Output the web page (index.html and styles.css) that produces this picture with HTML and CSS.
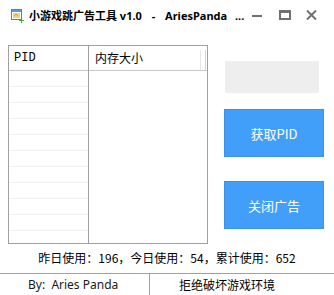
FILE: index.html
```html
<!DOCTYPE html>
<html>
<head>
<meta charset="utf-8">
<link rel="stylesheet" href="styles.css">
</head>
<body>
<div class="titlebar">
  <svg class="appicon" width="13" height="14" viewBox="0 0 13 14">
    <rect x="0.5" y="0.5" width="10" height="10" fill="#fff" stroke="#7a7a7a"/>
    <rect x="1" y="1" width="9" height="2" fill="#5b9bd5"/>
    <rect x="2" y="4" width="7" height="5" fill="#f3d27a"/>
    <path d="M3 7 L5 5 L7 7" stroke="#c9a040" fill="none"/>
    <path d="M10.5 9 V14 M8 11.5 H13" stroke="#3fa35a" stroke-width="1.2"/>
  </svg>
  <span class="title">小游戏跳广告工具 v1.0<span class="wide"> - AriesPanda</span><span class="dots"> ...</span></span>
  <div class="controls">
    <span class="ctl min"></span>
    <span class="ctl max"></span>
    <svg class="ctl close" width="11" height="10" viewBox="0 0 11 10"><path d="M1 0.5 L10 9.5 M10 0.5 L1 9.5" stroke="#707070" stroke-width="2"/></svg>
  </div>
</div>
<div class="main">
  <div class="list">
    <div class="col col-pid">
      <div class="head">PID</div>
      <div class="rows">
        <div class="row"></div><div class="row"></div><div class="row"></div><div class="row"></div>
        <div class="row"></div><div class="row"></div><div class="row"></div><div class="row"></div>
        <div class="row"></div><div class="row"></div><div class="row"></div>
      </div>
    </div>
    <div class="col col-mem">
      <div class="head">内存大小<span class="grip"></span></div>
    </div>
  </div>
  <div class="side">
    <div class="field"></div>
    <button class="btn btn-get">获取PID</button>
    <button class="btn btn-close">关闭广告</button>
  </div>
</div>
<div class="stats">昨日使用：196，今日使用：54，累计使用：652</div>
<div class="footer">
  <div class="by">By:&nbsp; Aries Panda</div>
  <div class="motto">拒绝破坏游戏环境</div>
</div>
</body>
</html>
```
FILE: styles.css
```css
* { box-sizing: border-box; }
html, body { margin: 0; padding: 0; }
body {
  width: 334px;
  height: 295px;
  overflow: hidden;
  background: #fff;
  font-family: "Noto Sans", "Noto Sans CJK SC", sans-serif;
  color: #000;
}
.titlebar {
  height: 30px;
  display: flex;
  align-items: center;
  padding-left: 11px;
}
.appicon { margin-top: 2px; }
.title {
  margin-left: 5px;
  font-size: 11px;
  font-weight: bold;
  white-space: nowrap;
}
.title .wide { word-spacing: 7px; }
.title .dots { word-spacing: 5px; }
.controls {
  margin-left: auto;
  display: flex;
  align-items: center;
  height: 30px;
}
.ctl { display: block; }
.min {
  width: 10px;
  height: 2px;
  background: #707070;
  margin-top: 1px;
}
.max {
  width: 12px;
  height: 10px;
  border: 2px solid #707070;
  border-top-width: 3px;
  margin-left: 17px;
}
.close { margin-left: 15px; margin-right: 17px; }

.main {
  display: flex;
  padding: 15px 0 0 8px;
  height: 214px;
}
.list {
  width: 200px;
  height: 199px;
  border: 1px solid #a0a0a0;
  display: flex;
}
.col { display: flex; flex-direction: column; }
.col-pid {
  width: 80px;
  border-right: 1px solid #a0a0a0;
  overflow: hidden;
}
.col-mem { flex: 1; }
.head {
  height: 25px;
  flex: none;
  border-bottom: 1px solid #c8c8c8;
  font-size: 12px;
  line-height: 24px;
  padding-left: 5px;
  position: relative;
}
.col-pid .head {
  font-family: "Liberation Mono", "DejaVu Sans Mono", monospace;
  font-size: 12px;
}
.col-mem .head { padding-left: 6px; font-family: "Noto Sans CJK SC", sans-serif; }
.grip {
  position: absolute;
  right: 1px;
  top: 4px;
  width: 6px;
  height: 20px;
  border-left: 1px solid #e6e6e6;
  border-right: 1px solid #d8d8d8;
}
.row {
  height: 16px;
  border-bottom: 1px solid #f0f0f0;
}
.side {
  display: flex;
  flex-direction: column;
  margin-left: 16px;
}
.field {
  width: 94px;
  height: 32px;
  margin-top: 16px;
  margin-left: 1px;
  background: #eeeeee;
}
.btn {
  width: 100px;
  height: 48px;
  background: #419ffa;
  border: 1px solid #3b92ee;
  color: #fff;
  font-family: "Noto Sans CJK SC", sans-serif;
  font-size: 13px;
  padding: 0;
}
.btn-get { margin-top: 16px; }
.btn-close { margin-top: 24px; }
.stats {
  height: 30px;
  font-family: "Noto Sans CJK SC", sans-serif;
  font-size: 12px;
  line-height: 28px;
  text-align: center;
  border-bottom: 1px solid #a0a0a0;
}
.footer {
  display: flex;
  height: 21px;
  font-family: "Noto Sans", "Noto Sans CJK SC", sans-serif;
  font-size: 12px;
  line-height: 21px;
}
.by {
  width: 150px;
  padding-left: 28px;
  border-right: 1px solid #a0a0a0;
  color: #1a1a1a;
}
.motto {
  padding-left: 29px;
  font-family: "Noto Sans CJK SC", sans-serif;
}
```
